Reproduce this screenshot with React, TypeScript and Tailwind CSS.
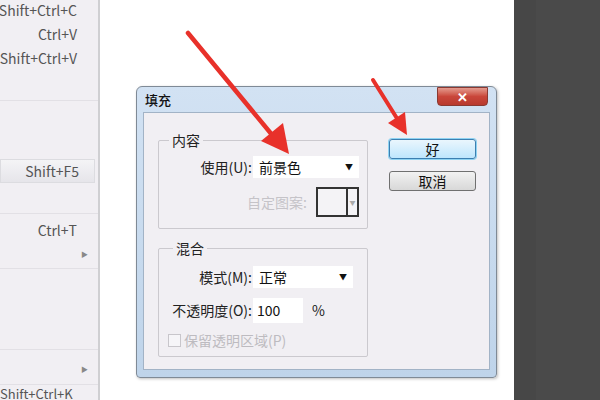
import React from "react";

const font = { fontFamily: '"Noto Sans CJK SC", "Liberation Sans", sans-serif' };

function MenuRow({ text, arrow, highlight }: any) {
  return (
    <div
      className={
        "h-6 flex items-center justify-end text-[14px] text-[#555] " +
        (arrow ? "pr-[10px] " : "pr-[21px] ") +
        (highlight ? "bg-gradient-to-b from-[#f4f4f6] to-[#e6e5ea] border border-[#dcdce0] mr-[3px] !pr-[15px]" : "")
      }
    >
      {arrow ? <span className="text-[7px] text-[#888]">▶</span> : text}
    </div>
  );
}

export default function App() {
  return (
    <div className="relative w-[600px] h-[400px] overflow-hidden bg-white flex" style={font}>
      {/* left menu */}
      <div className="w-[100px] h-full bg-[#f1eff3] border-r-2 border-[#cfcfd2] flex flex-col">
        <div className="-mt-[2px]">
          <MenuRow text="Shift+Ctrl+C" />
          <MenuRow text="Ctrl+V" />
          <MenuRow text="Shift+Ctrl+V" />
        </div>
        <div className="h-[28px]" />
        <div className="border-t border-[#e2e0e5] mt-[2px]" />
        <div className="h-[58px]" />
        <MenuRow text="Shift+F5" highlight />
        <div className="h-[30px]" />
        <div className="border-t border-[#e2e0e5]" />
        <div className="h-[4px]" />
        <MenuRow text="Ctrl+T" />
        <MenuRow arrow />
        <div className="border-t border-[#e2e0e5] mt-[2px]" />
        <div className="h-[80px]" />
        <div className="border-t border-[#e2e0e5]" />
        <div className="h-[7px]" />
        <MenuRow arrow />
        <div className="border-t border-[#e2e0e5] mt-[3px]" />
        <div className="text-[13px] text-[#555] leading-none pt-[2px]">Shift+Ctrl+K</div>
      </div>

      {/* canvas */}
      <div className="flex-1 bg-white" />
      <div className="w-[22px] h-full bg-[#474747]" />
      <div className="w-[64px] h-full bg-[#4a4a4a]" />

      {/* dialog window */}
      <div className="absolute left-[136px] top-[86px] w-[361px] h-[292px] rounded-t-[6px] rounded-b-[4px] border border-[#7f8a96] bg-gradient-to-b from-[#d2e2f3] to-[#bfd4ea] shadow-[1px_1px_3px_rgba(0,0,0,0.25)] flex flex-col">
        <div className="h-[25px] flex items-center justify-between pl-[8px] pr-[8px]">
          <span className="text-[13px] text-[#111] mt-[1px] font-medium">填充</span>
          <div className="w-[51px] h-[19px] -mt-[6px] rounded-b-[4px] border border-[#8a3a32] bg-gradient-to-b from-[#e39a8e] via-[#c9463a] to-[#b83a2e] flex items-center justify-center">
            <span className="text-white text-[13px] font-bold leading-none">✕</span>
          </div>
        </div>
        <div className="mx-[6px] mb-[7px] flex-1 bg-[#f1eff3] border border-[#a2b3c6] flex pt-[27px] pl-[14px]">
          <div className="w-[210px] flex flex-col">
            {/* 内容 */}
            <div className="relative h-[89px] border border-[#cbc9ce] rounded-[2px]">
              <span className="absolute -top-[11px] left-[10px] px-[3px] bg-[#f1eff3] text-[14px] text-[#222]">内容</span>
              <div className="flex items-center mt-[15px]">
                <span className="w-[93px] text-right text-[14px] text-[#222]">使用(U):</span>
                <div className="ml-[1px] w-[106px] h-[22px] bg-white flex items-center justify-between px-[6px]">
                  <span className="text-[14px] text-[#111]">前景色</span>
                  <span className="text-[8px] text-[#111]">▼</span>
                </div>
              </div>
              <div className="flex items-center mt-[9px]">
                <span className="w-[148px] text-right text-[14px] text-[#c5c3c8]">自定图案:</span>
                <div className="ml-[9px] w-[43px] h-[30px] border-2 border-[#333] flex bg-[#f4f3f6]">
                  <div className="flex-1" />
                  <div className="w-[11px] border-l-2 border-[#333] flex items-center justify-center text-[6px] text-[#aaa]">▼</div>
                </div>
              </div>
            </div>
            {/* 混合 */}
            <div className="relative mt-[19px] h-[109px] border border-[#cbc9ce] rounded-[2px]">
              <span className="absolute -top-[11px] left-[14px] px-[3px] bg-[#f1eff3] text-[14px] text-[#222]">混合</span>
              <div className="flex items-center mt-[17px]">
                <span className="w-[93px] text-right text-[14px] text-[#222]">模式(M):</span>
                <div className="ml-[1px] w-[100px] h-[22px] bg-white flex items-center justify-between px-[6px]">
                  <span className="text-[14px] text-[#111]">正常</span>
                  <span className="text-[8px] text-[#111]">▼</span>
                </div>
              </div>
              <div className="flex items-center mt-[10px]">
                <span className="w-[93px] text-right text-[14px] text-[#222] whitespace-nowrap">不透明度(O):</span>
                <div className="ml-[1px] w-[50px] h-[25px] bg-white flex items-center px-[4px]">
                  <span className="text-[14px] text-[#111]">100</span>
                </div>
                <span className="ml-[9px] text-[14px] text-[#222]">%</span>
              </div>
              <div className="flex items-center mt-[7px] ml-[9px]">
                <div className="w-[13px] h-[13px] border border-[#c8c6cb] bg-[#f6f5f8]" />
                <span className="ml-[3px] text-[14px] text-[#bdbbc0]">保留透明区域(P)</span>
              </div>
            </div>
          </div>
          {/* buttons */}
          <div className="ml-[21px] flex flex-col gap-[12px] -mt-[1px]">
            <div className="w-[87px] h-[20px] rounded-[3px] border border-[#3c7fb1] shadow-[0_0_0_1px_#8fd3f2] bg-gradient-to-b from-[#eaf6fd] to-[#bee6fd] flex items-center justify-center text-[14px] text-[#111]">
              好
            </div>
            <div className="w-[87px] h-[20px] rounded-[3px] border border-[#707070] bg-gradient-to-b from-[#f2f2f2] to-[#d8d8d8] flex items-center justify-center text-[14px] text-[#111]">
              取消
            </div>
          </div>
        </div>
      </div>

      {/* red arrows */}
      <svg className="absolute left-0 top-0 pointer-events-none" width="600" height="400">
        <line x1="188" y1="33" x2="273" y2="136" stroke="#e8312a" strokeWidth="4.5" strokeLinecap="round" />
        <polygon points="289,154 261,141 283,123" fill="#e8312a" />
        <line x1="373" y1="80" x2="398" y2="120" stroke="#e8312a" strokeWidth="4" strokeLinecap="round" />
        <polygon points="407,135 388,123 405,112" fill="#e8312a" />
      </svg>
    </div>
  );
}
